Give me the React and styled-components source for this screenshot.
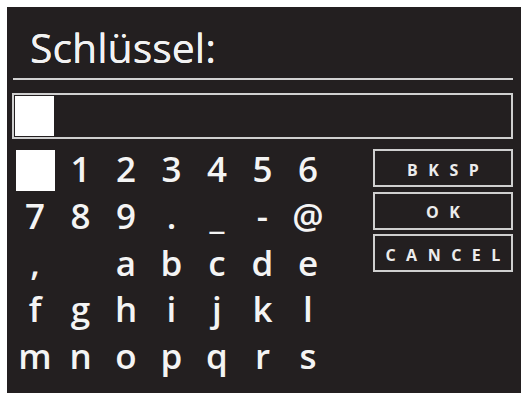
import React from "react";
import styled, { createGlobalStyle } from "styled-components";

const GlobalStyle = createGlobalStyle`
  html, body {
    margin: 0;
    padding: 0;
    background: #ffffff;
    overflow: hidden;
  }
  body {
    font-family: "Open Sans", "DejaVu Sans", sans-serif;
  }
`;

const Screen = styled.div`
  margin: 7px 0 0 7px;
  width: 514px;
  height: 386px;
  box-sizing: border-box;
  padding: 0 8px 0 5px;
  background: #231f20;
  color: #f2f2f2;
  overflow: hidden;
  display: flex;
  flex-direction: column;
`;

const Title = styled.div`
  padding: 12px 0 0 18px;
  height: 56px;
  font-size: 41px;
  font-weight: 400;
  line-height: 56px;
  text-shadow: 0 0 0.6px #f2f2f2;
`;

const Divider = styled.div`
  margin: 3px 0 0 1px;
  height: 2px;
  background: #d2d2d2;
`;

const InputBox = styled.div`
  margin-top: 13px;
  height: 46px;
  box-sizing: border-box;
  border: 2px solid #cfcfcf;
  padding: 1px;
  display: flex;
`;

const Cursor = styled.div`
  width: 39px;
  height: 40px;
  background: #ffffff;
`;

const Body = styled.div`
  margin-top: 7px;
  display: flex;
  align-items: flex-start;
`;

const Keys = styled.div`
  display: grid;
  grid-template-columns: repeat(7, 45.5px);
  grid-auto-rows: 46.75px;
  margin-left: 0.25px;
`;

const Key = styled.div`
  display: flex;
  align-items: center;
  justify-content: center;
  font-size: 35px;
  font-weight: 600;
  line-height: 46.5px;
  color: #f4f4f4;
`;

const Selected = styled.div`
  width: 39px;
  height: 41px;
  background: #ffffff;
  margin-top: 3px;
`;

const Buttons = styled.div`
  margin: 3px 0 0 42px;
  display: flex;
  flex-direction: column;
  gap: 4.5px;
  flex: 1;
`;

const Button = styled.div`
  height: 38px;
  box-sizing: border-box;
  border: 2px solid #cfcfcf;
  display: flex;
  align-items: center;
  justify-content: center;
  font-size: 16px;
  font-weight: 700;
  letter-spacing: 10.5px;
  padding: 3px 0 0 10.5px;
  color: #ececec;
`;

const rows = [
  ["", "1", "2", "3", "4", "5", "6"],
  ["7", "8", "9", ".", "_", "-", "@"],
  [",", " ", "a", "b", "c", "d", "e"],
  ["f", "g", "h", "i", "j", "k", "l"],
  ["m", "n", "o", "p", "q", "r", "s"],
];

const App = () => {
  return (
    <>
      <GlobalStyle />
      <Screen>
        <Title>Schlüssel:</Title>
        <Divider />
        <InputBox>
          <Cursor />
        </InputBox>
        <Body>
          <Keys>
            {rows.flat().map((ch, i) => (
              <Key key={i}>{i === 0 ? <Selected /> : ch}</Key>
            ))}
          </Keys>
          <Buttons>
            <Button>BKSP</Button>
            <Button>OK</Button>
            <Button>CANCEL</Button>
          </Buttons>
        </Body>
      </Screen>
    </>
  );
};

export default App;
